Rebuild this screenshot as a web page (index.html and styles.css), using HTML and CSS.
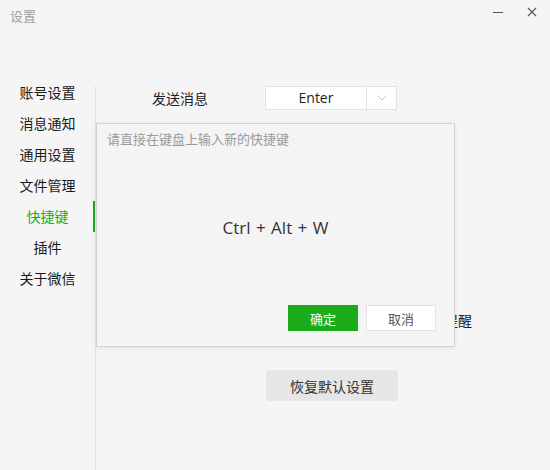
FILE: index.html
```html
<!DOCTYPE html>
<html lang="zh">
<head>
    <meta charset="UTF-8">
    <title>设置</title>
    <link rel="stylesheet" href="styles.css">
</head>
<body>

<div class="window">
    <div class="titlebar">
        <span class="title">设置</span>
        <div class="controls">
            <svg class="ctl" width="10" height="10" viewBox="0 0 10 10"><line x1="0" y1="5.5" x2="10" y2="5.5" stroke="#555" stroke-width="1"/></svg>
            <svg class="ctl" width="10" height="10" viewBox="0 0 10 10"><path d="M1 1 L9 9 M9 1 L1 9" stroke="#555" stroke-width="1.1" fill="none"/></svg>
        </div>
    </div>

    <div class="body">
        <ul class="sidebar">
            <li>账号设置</li>
            <li>消息通知</li>
            <li>通用设置</li>
            <li>文件管理</li>
            <li class="active">快捷键</li>
            <li>插件</li>
            <li>关于微信</li>
        </ul>

        <div class="main">
            <div class="row">
                <span class="label">发送消息</span>
                <div class="select">
                    <span class="select-value">Enter</span>
                    <span class="select-arrow">
                        <svg width="10" height="6" viewBox="0 0 10 6"><path d="M0.5 0.5 L5 5 L9.5 0.5" stroke="#c4c4c4" fill="none"/></svg>
                    </span>
                </div>
            </div>
            <div class="row hidden-row">
                <span class="check-text">冲突提醒</span>
            </div>
            <button class="reset">恢复默认设置</button>
        </div>
    </div>

    <div class="dialog">
        <div class="hint">请直接在键盘上输入新的快捷键</div>
        <div class="keys">Ctrl + Alt + W</div>
        <div class="actions">
            <button class="btn ok">确定</button>
            <button class="btn cancel">取消</button>
        </div>
    </div>
</div>

</body>
</html>
```

FILE: styles.css
```css
body {
    margin: 0;
    padding: 0;
    background: #f5f5f5;
    font-family: "Noto Sans CJK SC", "Noto Sans", sans-serif;
    color: #222;
}
.window {
    position: relative;
    width: 550px;
    height: 470px;
    overflow: hidden;
}
.titlebar {
    display: flex;
    justify-content: space-between;
    height: 32px;
}
.title {
    font-size: 13px;
    color: #a0a0a0;
    padding: 7px 0 0 10px;
    line-height: 18px;
}
.controls {
    display: flex;
    gap: 24px;
    padding: 7px 13px 0 0;
}
.body {
    display: flex;
    height: 438px;
}
.sidebar {
    list-style: none;
    margin: 0;
    padding: 45px 0 0 0;
    width: 95px;
}
.sidebar li {
    position: relative;
    height: 31px;
    line-height: 31px;
    text-align: center;
    font-size: 14px;
    color: #1a1a1a;
}
.sidebar li.active {
    color: #1aad19;
}
.sidebar li.active::after {
    content: "";
    position: absolute;
    right: 0;
    top: 0;
    width: 2px;
    height: 31px;
    background: #1aad19;
}
.main {
    flex: 1;
    margin-top: 54px;
    border-left: 1px solid #e4e4e4;
}
.row {
    display: flex;
    align-items: center;
    height: 24px;
}
.label {
    width: 113px;
    padding-left: 56px;
    font-size: 14px;
}
.select {
    display: flex;
    width: 132px;
    height: 24px;
    box-sizing: border-box;
    border: 1px solid #e2e2e2;
    background: #fff;
}
.select-value {
    width: 100px;
    text-align: center;
    font-family: "Open Sans", "Noto Sans", sans-serif;
    font-size: 14px;
    line-height: 22px;
    border-right: 1px solid #e2e2e2;
}
.select-arrow {
    flex: 1;
    display: flex;
    align-items: center;
    justify-content: center;
}
.hidden-row {
    margin-top: 198px;
}
.check-text {
    padding-left: 320px;
    font-size: 14px;
}
.reset {
    display: block;
    margin: 38px 0 0 170px;
    width: 132px;
    height: 31px;
    border: none;
    border-radius: 3px;
    background: #e6e6e6;
    font-family: inherit;
    font-size: 14px;
    color: #333;
}
.dialog {
    position: absolute;
    left: 96px;
    top: 123px;
    width: 359px;
    height: 224px;
    box-sizing: border-box;
    border: 1px solid #d2d2d2;
    background: #f4f4f4;
    box-shadow: 0 1px 6px rgba(0,0,0,0.08);
    display: flex;
    flex-direction: column;
}
.hint {
    padding: 6px 0 0 10px;
    font-size: 13px;
    line-height: 18px;
    color: #9a9a9a;
}
.keys {
    flex: 1;
    display: flex;
    align-items: center;
    justify-content: center;
    font-family: "Open Sans", "Noto Sans", sans-serif;
    font-size: 17px;
    word-spacing: 1px;
    color: #333;
    padding-top: 2px;
}
.actions {
    display: flex;
    justify-content: flex-end;
    gap: 8px;
    padding: 0 18px 15px 0;
}
.btn {
    width: 70px;
    height: 26px;
    font-family: inherit;
    font-size: 13px;
    border-radius: 0;
}
.ok {
    background: #1aad19;
    border: none;
    color: #fff;
}
.cancel {
    background: #fff;
    border: 1px solid #e2e2e2;
    color: #555;
}
```
